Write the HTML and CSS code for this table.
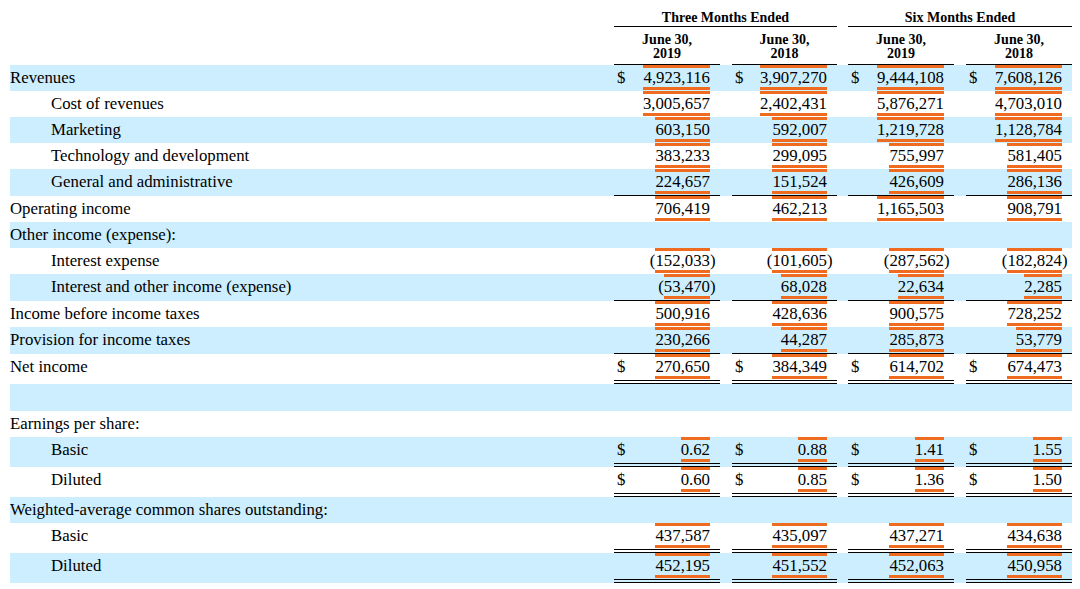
FILE: index.html
```html
<!DOCTYPE html>
<html lang="en">
<head>
<meta charset="utf-8">
<title>Statements of Operations</title>
<link rel="stylesheet" href="styles.css">
</head>
<body>
<div class="sheet">
  <div class="head1">
    <div class="lab"></div>
    <div class="grp g1">Three Months Ended</div>
    <div class="grp g2">Six Months Ended</div>
  </div>
  <div class="head2">
    <div class="lab"></div>
    <div class="hc c1">June 30,<br>2019</div>
    <div class="hc c2">June 30,<br>2018</div>
    <div class="hc c3">June 30,<br>2019</div>
    <div class="hc c4">June 30,<br>2018</div>
  </div>

  <div class="row blue">
    <div class="lab">Revenues</div>
    <div class="cell c1"><span class="cur">$</span><span class="val"><span class="tag">4,923,116</span></span><span class="suf"></span></div>
    <div class="cell c2"><span class="cur">$</span><span class="val"><span class="tag">3,907,270</span></span><span class="suf"></span></div>
    <div class="cell c3"><span class="cur">$</span><span class="val"><span class="tag">9,444,108</span></span><span class="suf"></span></div>
    <div class="cell c4"><span class="cur">$</span><span class="val"><span class="tag">7,608,126</span></span><span class="suf"></span></div>
  </div>
  <div class="row">
    <div class="lab in">Cost of revenues</div>
    <div class="cell c1"><span class="cur"></span><span class="val"><span class="tag">3,005,657</span></span><span class="suf"></span></div>
    <div class="cell c2"><span class="cur"></span><span class="val"><span class="tag">2,402,431</span></span><span class="suf"></span></div>
    <div class="cell c3"><span class="cur"></span><span class="val"><span class="tag">5,876,271</span></span><span class="suf"></span></div>
    <div class="cell c4"><span class="cur"></span><span class="val"><span class="tag">4,703,010</span></span><span class="suf"></span></div>
  </div>
  <div class="row blue">
    <div class="lab in">Marketing</div>
    <div class="cell c1"><span class="cur"></span><span class="val"><span class="tag">603,150</span></span><span class="suf"></span></div>
    <div class="cell c2"><span class="cur"></span><span class="val"><span class="tag">592,007</span></span><span class="suf"></span></div>
    <div class="cell c3"><span class="cur"></span><span class="val"><span class="tag">1,219,728</span></span><span class="suf"></span></div>
    <div class="cell c4"><span class="cur"></span><span class="val"><span class="tag">1,128,784</span></span><span class="suf"></span></div>
  </div>
  <div class="row">
    <div class="lab in">Technology and development</div>
    <div class="cell c1"><span class="cur"></span><span class="val"><span class="tag">383,233</span></span><span class="suf"></span></div>
    <div class="cell c2"><span class="cur"></span><span class="val"><span class="tag">299,095</span></span><span class="suf"></span></div>
    <div class="cell c3"><span class="cur"></span><span class="val"><span class="tag">755,997</span></span><span class="suf"></span></div>
    <div class="cell c4"><span class="cur"></span><span class="val"><span class="tag">581,405</span></span><span class="suf"></span></div>
  </div>
  <div class="row blue">
    <div class="lab in">General and administrative</div>
    <div class="cell c1 line"><span class="cur"></span><span class="val"><span class="tag">224,657</span></span><span class="suf"></span></div>
    <div class="cell c2 line"><span class="cur"></span><span class="val"><span class="tag">151,524</span></span><span class="suf"></span></div>
    <div class="cell c3 line"><span class="cur"></span><span class="val"><span class="tag">426,609</span></span><span class="suf"></span></div>
    <div class="cell c4 line"><span class="cur"></span><span class="val"><span class="tag">286,136</span></span><span class="suf"></span></div>
  </div>
  <div class="row">
    <div class="lab">Operating income</div>
    <div class="cell c1"><span class="cur"></span><span class="val"><span class="tag">706,419</span></span><span class="suf"></span></div>
    <div class="cell c2"><span class="cur"></span><span class="val"><span class="tag">462,213</span></span><span class="suf"></span></div>
    <div class="cell c3"><span class="cur"></span><span class="val"><span class="tag">1,165,503</span></span><span class="suf"></span></div>
    <div class="cell c4"><span class="cur"></span><span class="val"><span class="tag">908,791</span></span><span class="suf"></span></div>
  </div>
  <div class="row blue">
    <div class="lab">Other income (expense):</div>
  </div>
  <div class="row">
    <div class="lab in">Interest expense</div>
    <div class="cell c1"><span class="cur"></span><span class="val">(<span class="tag">152,033</span></span><span class="suf">)</span></div>
    <div class="cell c2"><span class="cur"></span><span class="val">(<span class="tag">101,605</span></span><span class="suf">)</span></div>
    <div class="cell c3"><span class="cur"></span><span class="val">(<span class="tag">287,562</span></span><span class="suf">)</span></div>
    <div class="cell c4"><span class="cur"></span><span class="val">(<span class="tag">182,824</span></span><span class="suf">)</span></div>
  </div>
  <div class="row blue">
    <div class="lab in">Interest and other income (expense)</div>
    <div class="cell c1 line"><span class="cur"></span><span class="val">(<span class="tag">53,470</span></span><span class="suf">)</span></div>
    <div class="cell c2 line"><span class="cur"></span><span class="val"><span class="tag">68,028</span></span><span class="suf"></span></div>
    <div class="cell c3 line"><span class="cur"></span><span class="val"><span class="tag">22,634</span></span><span class="suf"></span></div>
    <div class="cell c4 line"><span class="cur"></span><span class="val"><span class="tag">2,285</span></span><span class="suf"></span></div>
  </div>
  <div class="row">
    <div class="lab">Income before income taxes</div>
    <div class="cell c1"><span class="cur"></span><span class="val"><span class="tag">500,916</span></span><span class="suf"></span></div>
    <div class="cell c2"><span class="cur"></span><span class="val"><span class="tag">428,636</span></span><span class="suf"></span></div>
    <div class="cell c3"><span class="cur"></span><span class="val"><span class="tag">900,575</span></span><span class="suf"></span></div>
    <div class="cell c4"><span class="cur"></span><span class="val"><span class="tag">728,252</span></span><span class="suf"></span></div>
  </div>
  <div class="row blue">
    <div class="lab">Provision for income taxes</div>
    <div class="cell c1 line"><span class="cur"></span><span class="val"><span class="tag">230,266</span></span><span class="suf"></span></div>
    <div class="cell c2 line"><span class="cur"></span><span class="val"><span class="tag">44,287</span></span><span class="suf"></span></div>
    <div class="cell c3 line"><span class="cur"></span><span class="val"><span class="tag">285,873</span></span><span class="suf"></span></div>
    <div class="cell c4 line"><span class="cur"></span><span class="val"><span class="tag">53,779</span></span><span class="suf"></span></div>
  </div>
  <div class="row">
    <div class="lab">Net income</div>
    <div class="cell c1 dbl"><span class="cur">$</span><span class="val"><span class="tag">270,650</span></span><span class="suf"></span></div>
    <div class="cell c2 dbl"><span class="cur">$</span><span class="val"><span class="tag">384,349</span></span><span class="suf"></span></div>
    <div class="cell c3 dbl"><span class="cur">$</span><span class="val"><span class="tag">614,702</span></span><span class="suf"></span></div>
    <div class="cell c4 dbl"><span class="cur">$</span><span class="val"><span class="tag">674,473</span></span><span class="suf"></span></div>
  </div>
  <div class="row blue spacer"></div>
  <div class="row">
    <div class="lab">Earnings per share:</div>
  </div>
  <div class="row blue">
    <div class="lab in">Basic</div>
    <div class="cell c1 dbl"><span class="cur">$</span><span class="val"><span class="tag">0.62</span></span><span class="suf"></span></div>
    <div class="cell c2 dbl"><span class="cur">$</span><span class="val"><span class="tag">0.88</span></span><span class="suf"></span></div>
    <div class="cell c3 dbl"><span class="cur">$</span><span class="val"><span class="tag">1.41</span></span><span class="suf"></span></div>
    <div class="cell c4 dbl"><span class="cur">$</span><span class="val"><span class="tag">1.55</span></span><span class="suf"></span></div>
  </div>
  <div class="row">
    <div class="lab in">Diluted</div>
    <div class="cell c1 dbl"><span class="cur">$</span><span class="val"><span class="tag">0.60</span></span><span class="suf"></span></div>
    <div class="cell c2 dbl"><span class="cur">$</span><span class="val"><span class="tag">0.85</span></span><span class="suf"></span></div>
    <div class="cell c3 dbl"><span class="cur">$</span><span class="val"><span class="tag">1.36</span></span><span class="suf"></span></div>
    <div class="cell c4 dbl"><span class="cur">$</span><span class="val"><span class="tag">1.50</span></span><span class="suf"></span></div>
  </div>
  <div class="row blue">
    <div class="lab">Weighted-average common shares outstanding:</div>
  </div>
  <div class="row">
    <div class="lab in">Basic</div>
    <div class="cell c1 dbl"><span class="cur"></span><span class="val"><span class="tag">437,587</span></span><span class="suf"></span></div>
    <div class="cell c2 dbl"><span class="cur"></span><span class="val"><span class="tag">435,097</span></span><span class="suf"></span></div>
    <div class="cell c3 dbl"><span class="cur"></span><span class="val"><span class="tag">437,271</span></span><span class="suf"></span></div>
    <div class="cell c4 dbl"><span class="cur"></span><span class="val"><span class="tag">434,638</span></span><span class="suf"></span></div>
  </div>
  <div class="row blue">
    <div class="lab in">Diluted</div>
    <div class="cell c1 dbl"><span class="cur"></span><span class="val"><span class="tag">452,195</span></span><span class="suf"></span></div>
    <div class="cell c2 dbl"><span class="cur"></span><span class="val"><span class="tag">451,552</span></span><span class="suf"></span></div>
    <div class="cell c3 dbl"><span class="cur"></span><span class="val"><span class="tag">452,063</span></span><span class="suf"></span></div>
    <div class="cell c4 dbl"><span class="cur"></span><span class="val"><span class="tag">450,958</span></span><span class="suf"></span></div>
  </div>
</div>
</body>
</html>
```
FILE: styles.css
```css
html, body {
  margin: 0;
  padding: 0;
  background: #ffffff;
}

body {
  font-family: "Liberation Serif", "Times New Roman", serif;
  color: #000000;
  font-size: 16.8px;
}

.sheet {
  width: 1062px;
  padding: 0 8px 0 10px;
}

/* header */
.head1,
.head2 {
  display: flex;
}

.head1 .lab,
.head2 .lab {
  width: 604px;
  flex: none;
}

.grp {
  flex: none;
  font-weight: bold;
  font-size: 14px;
  line-height: 16px;
  height: 16px;
  padding-top: 10px;
  text-align: center;
  border-bottom: 1px solid #000;
}

.g1 { width: 223px; }
.g2 { width: 224px; margin-left: 11px; }

.hc {
  flex: none;
  font-weight: bold;
  font-size: 14px;
  line-height: 14px;
  padding-top: 6px;
  padding-bottom: 3px;
  text-align: center;
  border-bottom: 1px solid #000;
}

/* columns */
.c1 { width: 106px; }
.c2 { width: 105px; margin-left: 12px; }
.c3 { width: 106px; margin-left: 11px; }
.c4 { width: 106px; margin-left: 12px; }

/* body rows */
.row {
  display: flex;
  min-height: 26px;
}

.row.blue {
  background: #cceeff;
}

.row.spacer {
  min-height: 27px;
}

.row .lab {
  width: 604px;
  flex: none;
  padding-top: 4px;
  line-height: 18px;
  white-space: nowrap;
}

.row .lab.in {
  padding-left: 41px;
  width: 563px;
}

.cell {
  flex: none;
  height: 26px;
  display: flex;
  align-items: flex-start;
}

.cell.line {
  border-bottom: 1px solid #000;
}

.cell.dbl {
  border-bottom: 4px double #000;
}

.cur {
  flex: none;
  width: 12px;
  padding-left: 3px;
  padding-top: 4px;
  line-height: 18px;
}

.val {
  flex: 1;
  text-align: right;
  line-height: 18px;
  white-space: nowrap;
}

.suf {
  flex: none;
  width: 10px;
  padding-top: 4px;
  line-height: 18px;
}

.tag {
  display: inline-block;
  border-top: 3px solid #ee6b1f;
  border-bottom: 3px solid #ee6b1f;
  padding-top: 1px;
  line-height: 18px;
}
```
